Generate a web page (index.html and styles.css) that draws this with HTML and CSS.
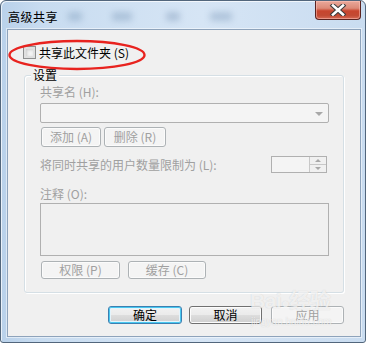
FILE: index.html
```html
<!DOCTYPE html>
<html lang="zh">
<head>
<meta charset="utf-8">
<link rel="stylesheet" href="styles.css">
</head>
<body>
<div class="window">
  <div class="titlebar">
    <span class="title">高级共享</span>
    <span class="blur b1"></span>
    <span class="blur b2"></span>
    <span class="blur b3"></span>
    <span class="blur b4"></span>
    <div class="close">
      <svg width="20" height="12" viewBox="0 0 20 12">
        <path d="M5 1.5 L15 10.5 M15 1.5 L5 10.5" stroke="#3b3b3b" stroke-width="4.6" stroke-linecap="square" fill="none"/>
        <path d="M5 1.5 L15 10.5 M15 1.5 L5 10.5" stroke="#ffffff" stroke-width="2.6" stroke-linecap="square" fill="none"/>
      </svg>
    </div>
  </div>
  <div class="content">
    <div class="check-row">
      <span class="checkbox"></span>
      <span class="check-label">共享此文件夹 (S)</span>
    </div>
    <div class="group">
      <div class="legend">设置</div>
      <div class="lbl lbl-name">共享名 (H):</div>
      <div class="combo"><span class="arrow"></span></div>
      <div class="btn-row1">
        <span class="btn dis w60">添加 (A)</span>
        <span class="btn dis w62">删除 (R)</span>
      </div>
      <div class="limit-row">
        <span class="lbl">将同时共享的用户数量限制为 (L):</span>
        <span class="spin"><span class="spin-btns"><span class="up"></span><span class="dn"></span></span></span>
      </div>
      <div class="lbl lbl-note">注释 (O):</div>
      <div class="textarea"></div>
      <div class="btn-row2">
        <span class="btn dis w79">权限 (P)</span>
        <span class="btn dis w78">缓存 (C)</span>
      </div>
    </div>
    <div class="footer">
      <span class="btn def w74">确定</span>
      <span class="btn norm w73 mid">取消</span>
      <span class="btn dis w73">应用</span>
    </div>
  </div>
  <svg class="ellipse" width="150" height="36" viewBox="0 0 150 36">
    <ellipse cx="75" cy="17" rx="67.5" ry="14" fill="none" stroke="#e8231f" stroke-width="2.4"/>
  </svg>
  <div class="watermark">
    <div class="wm1">Bai<span class="paw">●</span>经验</div>
    <div class="wm2">jingyan.baidu.com</div>
  </div>
</div>
</body>
</html>
```
FILE: styles.css
```css
html, body {
  margin: 0;
  padding: 0;
  background: #ffffff;
}
body {
  width: 367px;
  height: 344px;
  overflow: hidden;
  font-family: "Noto Sans CJK SC", "Liberation Sans", sans-serif;
  font-size: 12px;
}
.window {
  position: relative;
  width: 366px;
  height: 343px;
  box-sizing: border-box;
  border: 1px solid #52667c;
  border-radius: 6px 6px 3px 3px;
  background: linear-gradient(90deg, #b9d1ea 0px, #c8dcf0 40px, #d6e5f5 200px, #c9dcf0 366px);
  padding: 0 4px 5px 6px;
  display: flex;
  flex-direction: column;
  box-shadow: inset 1px 1px 0 rgba(255,255,255,0.7);
}
.titlebar {
  height: 28px;
  display: flex;
  align-items: flex-start;
  position: relative;
}
.title {
  margin-top: 9px;
  margin-left: 1px;
  font-size: 12px;
  line-height: 13px;
  letter-spacing: 0.5px;
  color: #000;
  white-space: nowrap;
  font-family: "Noto Sans CJK SC", sans-serif;
}
.blur {
  display: block;
  height: 9px;
  margin-top: 11px;
  background: rgba(110, 140, 175, 0.35);
  filter: blur(3px);
  border-radius: 3px;
}
.b1 { width: 14px; margin-left: 10px; }
.b2 { width: 20px; margin-left: 30px; }
.b3 { width: 14px; margin-left: 34px; background: rgba(90,120,160,0.3); }
.b4 { width: 22px; margin-left: 30px; }
.close {
  margin-left: auto;
  margin-right: 0;
  width: 46px;
  height: 19px;
  box-sizing: border-box;
  border: 1px solid #5a2320;
  border-top: none;
  border-radius: 0 0 4px 4px;
  background: linear-gradient(180deg, #e9a99b 0%, #dc8a78 40%, #c8452e 55%, #c24a33 80%, #d66a55 100%);
  display: flex;
  align-items: center;
  justify-content: center;
  box-shadow: inset 0 0 0 1px rgba(255,200,190,0.5);
}
.content {
  width: 354px;
  height: 308px;
  box-sizing: border-box;
  border: 1px solid #8ea3bb;
  background: #f0f0f0;
  display: flex;
  flex-direction: column;
  box-shadow: 0 0 0 1px rgba(255,255,255,0.5);
}
.check-row {
  display: flex;
  align-items: center;
  margin-top: 16px;
  margin-left: 15px;
  height: 13px;
}
.checkbox {
  width: 13px;
  height: 13px;
  box-sizing: border-box;
  border: 1px solid #8e8f8f;
  background: #f4f4f4;
  box-shadow: inset 0 0 0 2px #e0e0e0, inset 1px 1px 3px 2px #cbcbcb;
}
.check-label {
  margin-left: 3px;
  line-height: 13px;
  color: #000;
  white-space: nowrap;
}
.group {
  margin-top: 16px;
  margin-left: 16px;
  width: 320px;
  box-sizing: border-box;
  border: 1px solid #d5dfe5;
  border-radius: 3px;
  box-shadow: inset 1px 1px 0 #ffffff, 1px 1px 0 #ffffff;
  padding: 0 13px 13px 15px;
  display: flex;
  flex-direction: column;
}
.legend {
  align-self: flex-start;
  margin-top: -7px;
  margin-left: -9px;
  padding: 0 2px;
  background: #f0f0f0;
  line-height: 12px;
  height: 12px;
  color: #000;
}
.lbl {
  color: #a0a0a0;
  line-height: 12px;
  height: 12px;
  white-space: nowrap;
}
.lbl-name { margin-top: 5px; }
.combo {
  margin-top: 5px;
  height: 20px;
  width: 289px;
  box-sizing: border-box;
  border: 1px solid #b0b0b0;
  border-radius: 2px;
  background: #f4f4f4;
  display: flex;
  align-items: center;
  justify-content: flex-end;
}
.arrow {
  width: 0;
  height: 0;
  border-left: 4px solid transparent;
  border-right: 4px solid transparent;
  border-top: 4px solid #a8a8a8;
  margin-right: 5px;
  margin-top: 1px;
}
.btn {
  display: flex;
  align-items: center;
  justify-content: center;
  box-sizing: border-box;
  border-radius: 3px;
  white-space: nowrap;
  line-height: 12px;
}
.dis {
  border: 1px solid #adb2b5;
  background: #f4f4f4;
  color: #a0a0a0;
  box-shadow: inset 0 0 0 1px #fbfbfb;
}
.norm {
  border: 1px solid #707070;
  background: linear-gradient(180deg, #f2f2f2 0%, #ebebeb 48%, #dddddd 52%, #cfcfcf 100%);
  color: #000;
  box-shadow: inset 0 0 0 1px #fcfcfc;
}
.def {
  border: 1px solid #3c7fb1;
  background: linear-gradient(180deg, #f2f2f2 0%, #ebebeb 48%, #dddddd 52%, #cfcfcf 100%);
  color: #000;
  box-shadow: inset 0 0 0 1px #48c8f0, inset 0 0 0 2px #e4f4fc;
}
.w60 { width: 60px; }
.w62 { width: 62px; }
.w79 { width: 79px; }
.w78 { width: 78px; }
.w74 { width: 74px; }
.w73 { width: 73px; }
.btn-row1 {
  margin-top: 4px;
  margin-left: 1px;
  display: flex;
  gap: 3px;
  height: 20px;
}
.btn-row1 .btn { height: 20px; }
.limit-row {
  margin-top: 9px;
  height: 17px;
  display: flex;
  align-items: center;
  justify-content: space-between;
  padding-right: 2px;
  width: 289px;
  box-sizing: border-box;
}
.spin {
  width: 56px;
  height: 17px;
  box-sizing: border-box;
  border: 1px solid #b0b0b0;
  background: #f4f4f4;
  display: flex;
  justify-content: flex-end;
}
.spin-btns {
  width: 16px;
  display: flex;
  flex-direction: column;
  border-left: 1px solid #c8c8c8;
}
.spin-btns .up, .spin-btns .dn {
  flex: 1;
  display: flex;
  align-items: center;
  justify-content: center;
  background: #f0f0f0;
}
.spin-btns .up { border-bottom: 1px solid #c8c8c8; }
.spin-btns .up::after {
  content: "";
  border-left: 3px solid transparent;
  border-right: 3px solid transparent;
  border-bottom: 3px solid #a8a8a8;
}
.spin-btns .dn::after {
  content: "";
  border-left: 3px solid transparent;
  border-right: 3px solid transparent;
  border-top: 3px solid #a8a8a8;
}
.lbl-note { margin-top: 15px; }
.textarea {
  margin-top: 3px;
  width: 289px;
  height: 53px;
  box-sizing: border-box;
  border: 1px solid #b0b0b0;
  background: #f0f0f0;
}
.btn-row2 {
  margin-top: 5px;
  margin-left: 1px;
  display: flex;
  gap: 8px;
  height: 18px;
}
.btn-row2 .btn { height: 18px; }
.footer {
  margin-top: 13px;
  display: flex;
  justify-content: flex-end;
  padding-right: 16px;
  height: 18px;
}
.footer .btn { height: 18px; }
.footer .mid { margin-left: 7px; margin-right: 9px; }
.ellipse {
  position: absolute;
  left: 1px;
  top: 37px;
}
.watermark {
  position: absolute;
  left: 249px;
  top: 287px;
  color: rgba(255,255,255,0.7);
  text-shadow: 0 0 1px rgba(120,120,120,0.3);
  font-family: "Liberation Sans", "Noto Sans CJK SC", sans-serif;
  pointer-events: none;
}
.wm1 {
  font-size: 21px;
  font-weight: bold;
  line-height: 26px;
  white-space: nowrap;
  letter-spacing: -0.5px;
}
.paw { font-size: 14px; }
.wm2 {
  font-size: 10px;
  line-height: 12px;
  margin-left: 1px;
  white-space: nowrap;
}
```
